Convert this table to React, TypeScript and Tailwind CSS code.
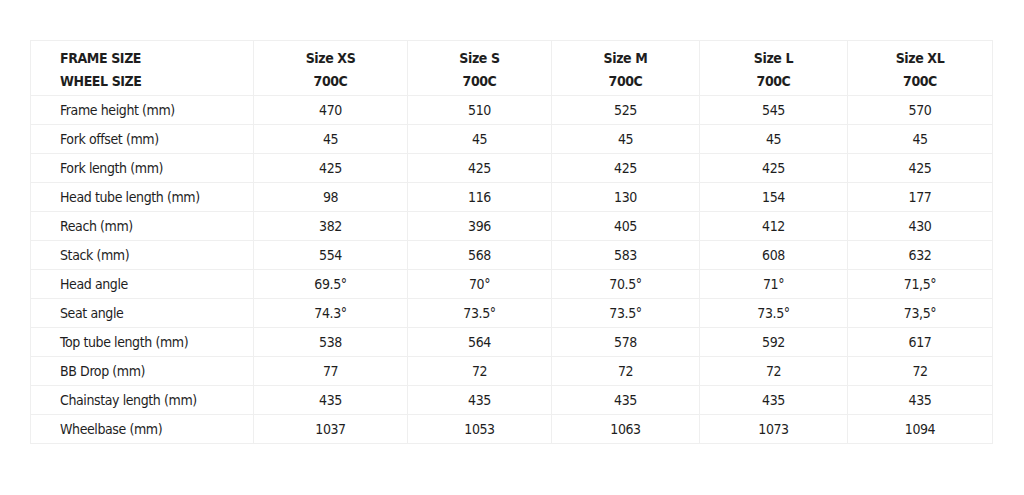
import React from "react";

const sizes = ["Size XS", "Size S", "Size M", "Size L", "Size XL"];
const colWidths = ["w-[154px]", "w-[144px]", "w-[148px]", "w-[148px]", "w-[145px]"];

const rows: [string, string[]][] = [
  ["Frame height (mm)", ["470", "510", "525", "545", "570"]],
  ["Fork offset (mm)", ["45", "45", "45", "45", "45"]],
  ["Fork length (mm)", ["425", "425", "425", "425", "425"]],
  ["Head tube length (mm)", ["98", "116", "130", "154", "177"]],
  ["Reach (mm)", ["382", "396", "405", "412", "430"]],
  ["Stack (mm)", ["554", "568", "583", "608", "632"]],
  ["Head angle", ["69.5°", "70°", "70.5°", "71°", "71,5°"]],
  ["Seat angle", ["74.3°", "73.5°", "73.5°", "73.5°", "73,5°"]],
  ["Top tube length (mm)", ["538", "564", "578", "592", "617"]],
  ["BB Drop (mm)", ["77", "72", "72", "72", "72"]],
  ["Chainstay length (mm)", ["435", "435", "435", "435", "435"]],
  ["Wheelbase (mm)", ["1037", "1053", "1063", "1073", "1094"]],
];

const App = () => {
  return (
    <div
      className="w-[1024px] h-[495px] bg-white pt-[40px] pl-[30px] text-[#1e1e1e] text-[14px] tracking-[-0.4px]"
      style={{ fontFamily: '"Liberation Sans Narrow", "DejaVu Sans Condensed", Roboto, sans-serif' }}
    >
      <table className="w-[962px] border-collapse table-fixed">
        <colgroup>
          <col className="w-[223px]" />
          {sizes.map((s, i) => (
            <col key={s} className={colWidths[i]} />
          ))}
        </colgroup>
        <thead>
          <tr className="h-[55px]">
            <th className="border border-[#efefef] pl-[29px] pt-[4px] text-left font-bold leading-[23px]">
              FRAME SIZE
              <br />
              WHEEL SIZE
            </th>
            {sizes.map((s) => (
              <th key={s} className="border border-[#efefef] pt-[4px] text-center font-bold leading-[23px]">
                {s}
                <br />
                700C
              </th>
            ))}
          </tr>
        </thead>
        <tbody>
          {rows.map(([label, values]) => (
            <tr key={label} className="h-[29px]">
              <td className="border border-[#efefef] pl-[29px] text-left">{label}</td>
              {values.map((v, i) => (
                <td key={i} className="border border-[#efefef] text-center">
                  {v}
                </td>
              ))}
            </tr>
          ))}
        </tbody>
      </table>
    </div>
  );
};

export default App;
